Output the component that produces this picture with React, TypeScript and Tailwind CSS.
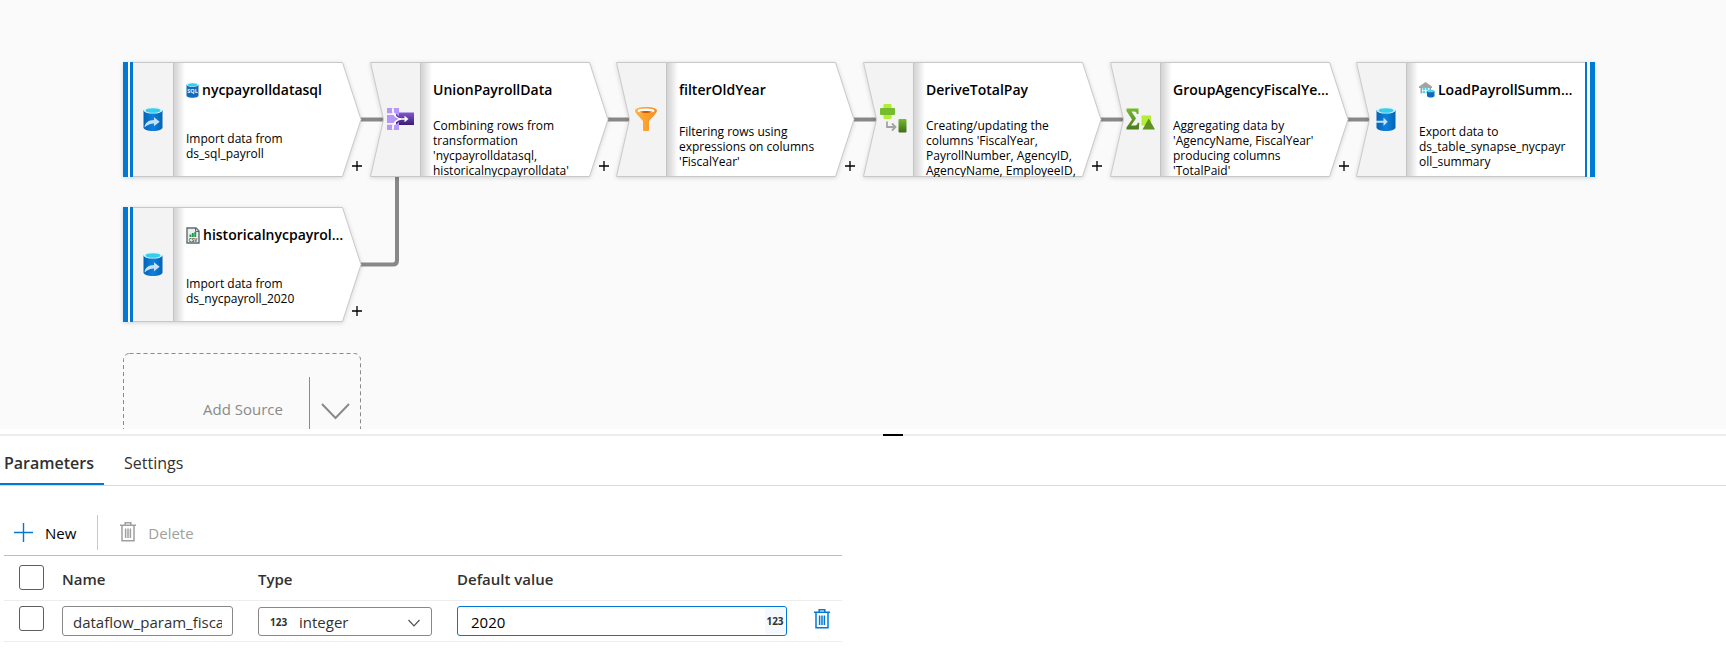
import type { ReactNode } from "react";
import { useState } from "react";

type Kind = "source" | "step" | "sink";

interface FlowNode {
  id: string;
  x: number;
  y: number;
  kind: Kind;
  title: string;
  description: string;
  icon: ReactNode;
  badge?: ReactNode;
}

function CylinderIcon({ variant }: { variant: "in" | "out" }) {
  return (
    <svg width="20" height="24" viewBox="0 0 20 24" aria-hidden="true">
      <defs>
        <linearGradient id={"cyl-" + variant} x1="0" x2="1">
          <stop offset="0" stopColor="#0064b8" />
          <stop offset="0.5" stopColor="#0f80dc" />
          <stop offset="1" stopColor="#0064b8" />
        </linearGradient>
      </defs>
      <path d="M.5 3v17.500C.5 22.400 4.700 24 10 24s9.500-1.600 9.500-3.500V3z" fill={"url(#cyl-" + variant + ")"} />
      <ellipse cx="10" cy="3.300" rx="9.500" ry="3.300" fill="#dff3fa" />
      <ellipse cx="10" cy="3.500" rx="7.500" ry="2.300" fill="#32d0ea" />
      {variant === "in" ? (
        <path d="M1.500 20.500c.3-4.500 3.500-7.300 9.500-7.500v-2.800l5.700 4.500-5.700 4.500v-2.800C7.500 16.400 4.500 17.500 1.500 20.500z" fill="#c3e1f8" />
      ) : (
        <path d="M0 13.700h7.500v-3.200l4.200 4.200-4.200 4.200v-3.200H0z" fill="#c3e1f8" />
      )}
    </svg>
  );
}

function UnionIcon() {
  return (
    <svg width="27" height="22" viewBox="0 0 27 22" aria-hidden="true">
      <defs>
        <linearGradient id="union" x1="0" y1="0" x2="0" y2="1">
          <stop offset="0" stopColor="#8258cf" />
          <stop offset="1" stopColor="#3b1c74" />
        </linearGradient>
      </defs>
      <path d="M9 4.500h18v12.500H9z" fill="url(#union)" />
      <path d="M0 0h5.300v5.300H0zM6.800 0h5.200v8L8.500 5.300H6.800zM0 7h6.500l4 4-4 4H0zM0 16.700h5.300V22H0zM6.800 16.700h1.700L12 14v8H6.800z" fill="#b796f9" />
      <path d="M5.500 1c1 6 3.500 9.800 9 10h3.500M5.500 21c1-6 3.500-9.800 9-10" fill="none" stroke="#fff" strokeWidth="1.500" />
      <path d="M17.500 7.800 21.500 11l-4 3.200z" fill="#fff" />
    </svg>
  );
}

function FilterIcon() {
  return (
    <svg width="22" height="24" viewBox="0 0 22 24" aria-hidden="true">
      <defs>
        <linearGradient id="funnel" x1="0" x2="1">
          <stop offset="0" stopColor="#ffb340" />
          <stop offset="1" stopColor="#f78d1e" />
        </linearGradient>
      </defs>
      <path d="M0 3.500C0 6 5 10.500 8 14v9c0 .6.400 1 1 1h4c.6 0 1-.4 1-1v-9c3-3.500 8-8 8-10.500C22 1.600 17 0 11 0S0 1.600 0 3.500z" fill="url(#funnel)" />
      <ellipse cx="11" cy="3.700" rx="8.500" ry="2.300" fill="#fff" />
      <path d="M4.500 4.800C6 4.200 8 3.900 11 3.900s5 .3 6.500.9C16 5.700 14 6 11 6s-5-.3-6.500-1.200z" fill="#d15900" />
    </svg>
  );
}

function DeriveIcon() {
  return (
    <svg width="27" height="29" viewBox="0 0 27 29" aria-hidden="true">
      <defs>
        <linearGradient id="derive" x1="0" y1="0" x2="0" y2="1">
          <stop offset="0" stopColor="#76bc2d" />
          <stop offset="1" stopColor="#3f6d14" />
        </linearGradient>
      </defs>
      <rect x="3.500" width="8" height="15" rx="1" fill="#b4ec36" />
      <rect y="4" width="15" height="7" rx="1" fill="#76bc2d" />
      <rect x="18.500" y="15" width="8" height="13.500" rx="1" fill="url(#derive)" />
      <path d="M7 17.500v5.500h8M12 19.500l3.500 3.500-3.500 3.500" fill="none" stroke="#a3a3a3" strokeWidth="1.800" />
    </svg>
  );
}

function AggregateIcon() {
  return (
    <svg width="29" height="22" viewBox="0 0 29 22" aria-hidden="true">
      <defs>
        <linearGradient id="sigma" x1="0" y1="0" x2="0" y2="1">
          <stop offset="0" stopColor="#76bc2d" />
          <stop offset="1" stopColor="#4b7b1c" />
        </linearGradient>
      </defs>
      <path d="M.5.500h12v5.500h-1.700c-.3-1.800-1-2.500-2.500-2.500H5.500L10 10.500 5 17.500h4c1.500 0 2.300-.8 2.700-2.700h1.600L12.800 21.500H.5v-2L6 11.500.5 3z" fill="url(#sigma)" />
      <path d="M15.500 7.500h9.500v10h-9.500z" fill="#b4ec36" />
      <path d="M22.700 10.500 29 21.500H16.500z" fill="#5c9321" />
    </svg>
  );
}

function SqlBadge() {
  return (
    <svg width="13" height="16" viewBox="0 0 13 16" className="shrink-0" aria-hidden="true">
      <path d="M.5 2.500v11c0 1.300 2.700 2.300 6 2.300s6-1 6-2.300v-11z" fill="#0f6cbd" />
      <ellipse cx="6.500" cy="2.600" rx="6" ry="2.200" fill="#dff3fa" />
      <ellipse cx="6.500" cy="2.700" rx="4.700" ry="1.500" fill="#32d0ea" />
      <text x="6.500" y="11.300" textAnchor="middle" fontSize="5.500" fontWeight="700" fill="#e8f4fc" className="font-['Open_Sans']">SQL</text>
    </svg>
  );
}

function CsvBadge() {
  return (
    <svg width="14" height="17" viewBox="0 0 14 17" className="shrink-0" aria-hidden="true">
      <path d="M1 1h9l3 3v12H1z" fill="#e9eef0" stroke="#5f6b70" strokeWidth="1.400" />
      <path d="M9.500 1v3.500H13" fill="none" stroke="#5f6b70" />
      <path d="M3.500 7.500h1.900V10H3.500zM5.900 6h1.900v4H5.900zM8.300 5h1.900v5H8.300z" fill="#1f9d4c" />
      <text x="7" y="14.500" textAnchor="middle" fontSize="4.500" fontWeight="700" fill="#4a5357" className="font-['Open_Sans']">CSV</text>
    </svg>
  );
}

function WarehouseBadge() {
  return (
    <svg width="16" height="16" viewBox="0 0 16 16" className="shrink-0" aria-hidden="true">
      <path d="M0 4.500 6.500 0 13 4.500V6H0z" fill="#a3a3a3" />
      <path d="M1.500 6H3v5.500H1.500zM10.500 6H12v2h-1.500z" fill="#a3a3a3" />
      <path d="M3.500 5.500H6V8H3.500zM6.700 5.500h2.500V8H6.700zM3.500 8.700H6v2.500H3.500zM6.700 8.700h1v2.500h-1z" fill="#50d5ee" />
      <path d="M8 9v5c0 .9 1.700 1.500 3.800 1.500s3.700-.6 3.700-1.500V9z" fill="#0f6cbd" />
      <ellipse cx="11.700" cy="9" rx="3.700" ry="1.300" fill="#50d5ee" />
    </svg>
  );
}

function TrashIcon() {
  return (
    <svg width="16" height="20" viewBox="0 0 16 20" fill="none" stroke="currentColor" strokeWidth="1.500" aria-hidden="true">
      <path d="M0 3.200h16M5.200 3V.8h5.600V3M2 3.500v15.200h12V3.500M5.600 6.500v9.500M8 6.500v9.500M10.400 6.500v9.500" />
    </svg>
  );
}

const nodes: FlowNode[] = [
  { id: "n1", x: 123, y: 62, kind: "source", title: "nycpayrolldatasql", description: "Import data from ds_sql_payroll", icon: <CylinderIcon variant="in" />, badge: <SqlBadge /> },
  { id: "n2", x: 370, y: 62, kind: "step", title: "UnionPayrollData", description: "Combining rows from transformation 'nycpayrolldatasql, historicalnycpayrolldata'", icon: <UnionIcon /> },
  { id: "n3", x: 616, y: 62, kind: "step", title: "filterOldYear", description: "Filtering rows using expressions on columns 'FiscalYear'", icon: <FilterIcon /> },
  { id: "n4", x: 863, y: 62, kind: "step", title: "DeriveTotalPay", description: "Creating/updating the columns 'FiscalYear, PayrollNumber, AgencyID, AgencyName, EmployeeID,", icon: <DeriveIcon /> },
  { id: "n5", x: 1110, y: 62, kind: "step", title: "GroupAgencyFiscalYear", description: "Aggregating data by 'AgencyName, FiscalYear' producing columns 'TotalPaid'", icon: <AggregateIcon /> },
  { id: "n6", x: 1356, y: 62, kind: "sink", title: "LoadPayrollSummary", description: "Export data to ds_table_synapse_nycpayroll_summary", icon: <CylinderIcon variant="out" />, badge: <WarehouseBadge /> },
  { id: "n7", x: 123, y: 207, kind: "source", title: "historicalnycpayrolldata", description: "Import data from ds_nycpayroll_2020", icon: <CylinderIcon variant="in" />, badge: <CsvBadge /> },
];

const outlines: Record<Kind, string> = {
  source: "M.5.500H219.500L238 57.500 219.500 114.500H.5z",
  step: "M.5.500H219.500L238 57.500 219.500 114.500H.5L13.500 57.500z",
  sink: "M.5.500H238.500V114.500H.5L13.500 57.500z",
};

function NodeShape({ kind, id }: { kind: Kind; id: string }) {
  return (
    <svg className="absolute inset-0 overflow-visible drop-shadow-sm" width="239" height="115" viewBox="0 0 239 115" aria-hidden="true">
      <defs>
        <clipPath id={"clip-" + id}>
          <path d={outlines[kind]} />
        </clipPath>
        <linearGradient id={"fold-" + id} x1="0" x2="1">
          <stop offset="0" stopColor="#d2d2d2" />
          <stop offset="0.300" stopColor="#dcdcdc" />
          <stop offset="1" stopColor="#ffffff" />
        </linearGradient>
      </defs>
      <path d={outlines[kind]} fill="#fff" />
      <g clipPath={"url(#clip-" + id + ")"}>
        <path d="M0 0h50v115H0z" fill="#f3f3f3" />
        <path d="M50 0h12v115H50z" fill={"url(#fold-" + id + ")"} />
        <path d="M50 0h1v115h-1z" fill="#c4c4c4" />
      </g>
      <path d={outlines[kind]} fill="none" stroke="#c8c8c8" />
      {kind === "source" && (
        <>
          <path d="M5 0h2v115H5z" fill="#fff" />
          <path d="M0 0h5v115H0zM7 0h3v115H7z" fill="#0078d4" />
        </>
      )}
      {kind === "sink" && (
        <>
          <path d="M231 0h3v115h-3z" fill="#fff" />
          <path d="M229 0h2v115h-2zM234 0h5v115h-5z" fill="#0078d4" />
        </>
      )}
    </svg>
  );
}

function NodeCard({ node }: { node: FlowNode }) {
  return (
    <article className="absolute h-[115px] w-[239px]" style={{ left: node.x, top: node.y }}>
      <NodeShape kind={node.kind} id={node.id} />
      <div className="relative flex h-full overflow-hidden">
        <div className="flex w-[50px] shrink-0 items-center justify-center pb-0.5 pl-2.5">
          {node.icon}
        </div>
        <div className="flex min-w-0 flex-1 flex-col pl-[13px] pr-[18px] pt-[18px]">
          <h3 className="flex h-5 items-center gap-[3px] text-[14px] font-semibold leading-5 text-black">
            {node.badge}
            <span className="truncate">{node.title}</span>
          </h3>
          <div className="mt-[18px] flex h-[56px] flex-col">
            <p className="my-auto w-[152px] text-[12px] leading-[15px] text-black wrap-anywhere">{node.description}</p>
          </div>
        </div>
      </div>
      {node.kind !== "sink" && (
        <button type="button" aria-label={"Add after " + node.title} className="absolute bottom-1.5 right-0 flex size-2.5 items-center justify-center text-black">
          <svg width="10" height="10" viewBox="0 0 10 10" className="shrink-0" aria-hidden="true">
            <path d="M0 5h10M5 0v10" stroke="currentColor" strokeWidth="1.300" />
          </svg>
        </button>
      )}
    </article>
  );
}

function Connectors() {
  return (
    <svg className="absolute left-0 top-0" width="1400" height="300" viewBox="0 0 1400 300" fill="none" stroke="#888" strokeWidth="4" aria-hidden="true">
      <path d="M361 119.500h23M608 119.500h22M854 119.500h23M1101 119.500h23M1348 119.500h22" />
      <path d="M361 264.500h32q4 0 4-4V177" />
    </svg>
  );
}

function Canvas() {
  return (
    <main className="relative min-h-[360px] flex-1 overflow-hidden bg-[#fafafa]">
      <Connectors />
      {nodes.map((node) => (
        <NodeCard key={node.id} node={node} />
      ))}
      <button type="button" className="absolute left-[123px] top-[353px] h-[115px] w-[238px] text-[#8a8a8a]">
        <svg className="absolute inset-0" width="238" height="115" viewBox="0 0 238 115" fill="none" stroke="currentColor" aria-hidden="true">
          <rect x="0.500" y="0.500" width="237" height="114" rx="6" strokeDasharray="4 3" />
          <path d="M186.500 24v67" />
          <path d="M199 51l13.500 14L226 51" strokeWidth="2" />
        </svg>
        <span className="absolute left-[80px] top-[46px] text-[15px] leading-5">Add Source</span>
      </button>
    </main>
  );
}

function Tabs() {
  const [active, setActive] = useState("Parameters");
  return (
    <div role="tablist" className="flex h-[50px] gap-4 border-b border-[#dcdcdc] text-[16px] text-[#323130]">
      {["Parameters", "Settings"].map((tab) => (
        <button
          key={tab}
          type="button"
          role="tab"
          aria-selected={active === tab}
          onClick={() => setActive(tab)}
          className={
            "border-b-2 pl-1 pr-[10px] pt-1.5 " +
            (active === tab ? "border-[#0078d4] font-semibold" : "border-transparent")
          }
        >
          {tab}
        </button>
      ))}
    </div>
  );
}

const tick = "block size-[25px] appearance-none rounded-[3px] border border-[#605e5c] bg-white checked:bg-[#0078d4]";

function ParametersTable() {
  const [name, setName] = useState("dataflow_param_fiscalyear");
  const [type, setType] = useState("integer");
  const [value, setValue] = useState("2020");
  return (
    <table className="w-full table-fixed border-collapse text-left text-[#323130]">
      <colgroup>
        <col className="w-[58px]" />
        <col className="w-[196px]" />
        <col className="w-[199px]" />
        <col />
        <col className="w-7" />
      </colgroup>
      <thead>
        <tr className="h-[45px] border-b border-t border-b-[#ededed] border-t-[#bdbdbd] text-[15px]">
          <th className="pb-0.5 pl-[15px]"><input type="checkbox" aria-label="Select all" className={tick} /></th>
          <th className="pt-0.5 font-semibold">Name</th>
          <th className="pt-0.5 font-semibold">Type</th>
          <th className="pt-0.5 font-semibold">Default value</th>
          <th><span className="sr-only">Actions</span></th>
        </tr>
      </thead>
      <tbody>
        <tr className="h-[41px] border-b border-[#ededed] text-[15px]">
          <td className="pb-1.5 pl-[15px]"><input type="checkbox" aria-label="Select parameter" className={tick} /></td>
          <td className="pr-[25px]">
            <input aria-label="Name" value={name} onChange={(e) => setName(e.target.value)} className="block h-[30px] w-full rounded-[3px] border border-[#8a8886] px-[10px] pt-0.5 outline-none" />
          </td>
          <td className="pr-[25px]">
            <div className="relative">
              <select aria-label="Type" value={type} onChange={(e) => setType(e.target.value)} className="block h-[29px] w-full appearance-none rounded-[3px] border border-[#8a8886] bg-white pl-10 pt-0.5 outline-none">
                <option>integer</option>
                <option>string</option>
              </select>
              <span className="pointer-events-none absolute left-3 top-[7px] text-[10px] font-bold leading-4">123</span>
              <svg className="pointer-events-none absolute right-3 top-3" width="12" height="8" viewBox="0 0 12 8" fill="none" stroke="#505050" aria-hidden="true">
                <path d="M.5 1 6 6.800 11.500 1" strokeWidth="1.200" />
              </svg>
            </div>
          </td>
          <td className="pr-[27px]">
            <div className="relative">
              <input aria-label="Default value" value={value} onChange={(e) => setValue(e.target.value)} className="block h-[30px] w-full rounded-[3px] border border-[#0078d4] pl-[13px] pr-7 pt-0.5 text-black outline-none" />
              <span className="absolute inset-y-0.5 right-0.5 flex w-5 items-center justify-center bg-[#f3f9fe] text-[10px] font-bold">123</span>
            </div>
          </td>
          <td className="pb-1">
            <button type="button" aria-label="Delete parameter" className="block text-[#0078d4]"><TrashIcon /></button>
          </td>
        </tr>
      </tbody>
    </table>
  );
}

export default function App() {
  return (
    <div className="flex min-h-screen flex-col bg-white font-['Open_Sans','Noto_Sans',sans-serif]">
      <Canvas />
      <div className="mt-[5px] flex h-0.5 justify-center bg-[#ededed] pl-[60px]">
        <div role="separator" aria-label="Resize panel" className="h-0.5 w-5 bg-black" />
      </div>
      <section>
        <Tabs />
        <div className="max-w-[842px] pb-[9px] pl-1 pt-[27px]">
          <div className="flex h-[42px] items-start text-[15px]">
            <button type="button" className="flex h-[38px] items-center gap-3 pl-[10px] pr-[21px] text-black">
              <svg width="19" height="19" viewBox="0 0 19 19" stroke="#0078d4" strokeWidth="1.400" aria-hidden="true">
                <path d="M0 9.500h19M9.500 0v19" />
              </svg>
              <span className="pt-0.5">New</span>
            </button>
            <div className="mt-0.5 h-[35px] w-px bg-[#c8c8c8]" />
            <button type="button" disabled className="flex h-[38px] items-center gap-3 pl-[22px] text-[#a19f9d]">
              <TrashIcon />
              <span className="pt-0.5">Delete</span>
            </button>
          </div>
          <ParametersTable />
        </div>
      </section>
    </div>
  );
}
